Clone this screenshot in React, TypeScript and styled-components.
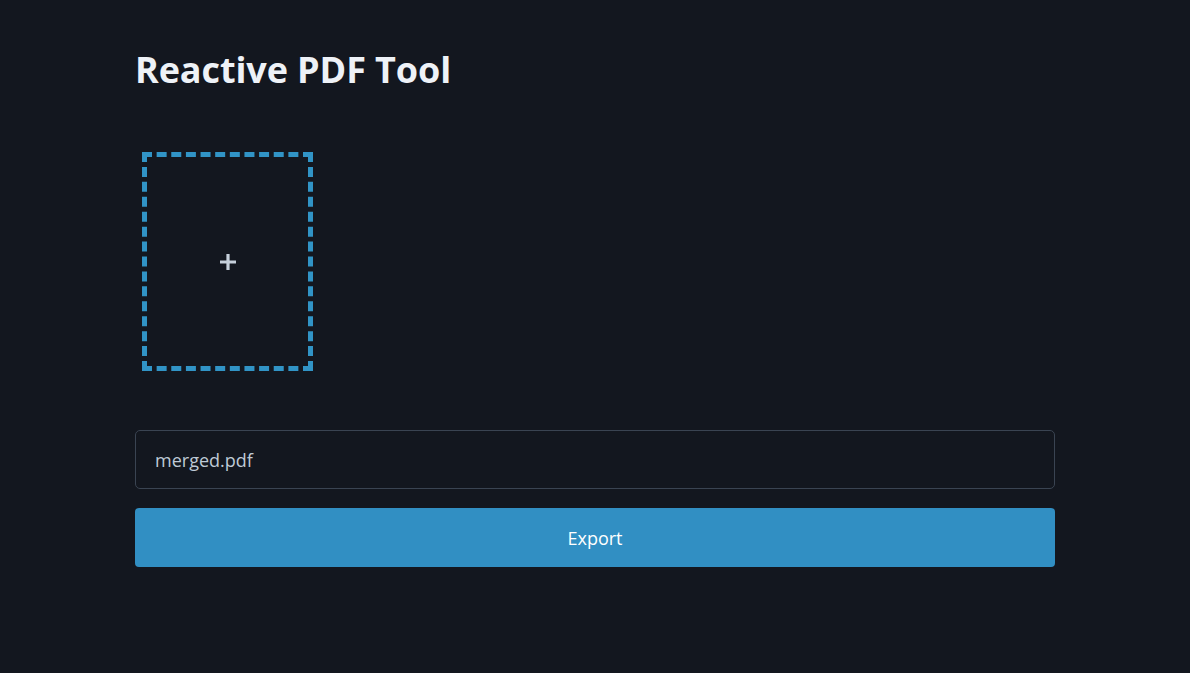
import React from "react";
import styled, { createGlobalStyle } from "styled-components";

const Global = createGlobalStyle`
  html, body { margin: 0; padding: 0; background: #13171f; }
  body { font-family: "Segoe UI", "Open Sans", "Noto Sans", sans-serif; color: #e8edf3; }
  * { box-sizing: border-box; }
`;

const Page = styled.main`
  width: 920px;
  margin: 0 0 0 135px;
  padding-top: 45px;
  display: flex;
  flex-direction: column;
`;

const Title = styled.h1`
  margin: 0;
  font-size: 36px;
  line-height: 49px;
  font-weight: 700;
  color: #eef2f7;
  letter-spacing: -0.1px;
`;

const Pages = styled.section`
  display: flex;
  gap: 16px;
  padding: 58px 7px 59px;
`;

const AddSlot = styled.button`
  width: 171px;
  height: 219px;
  border: 5px dashed #3194c6;
  background: transparent;
  display: flex;
  align-items: center;
  justify-content: center;
  cursor: pointer;
  padding: 0;
  color: #c6d0db;
`;

const Form = styled.div`
  display: flex;
  flex-direction: column;
  gap: 19px;
`;

const NameInput = styled.input`
  height: 59px;
  width: 100%;
  background: #13171f;
  border: 1px solid #3a4452;
  border-radius: 5px;
  padding: 0 19px;
  font-family: inherit;
  font-size: 18px;
  color: #bfcad6;
  outline: none;
`;

const ExportButton = styled.button`
  height: 59px;
  width: 100%;
  border: none;
  border-radius: 4px;
  background: #318fc3;
  color: #ffffff;
  font-family: inherit;
  font-size: 18px;
  padding-top: 2px;
  cursor: pointer;
`;

export default function App() {
  return (
    <>
      <Global />
      <Page>
        <Title>Reactive PDF Tool</Title>
        <Pages>
          <AddSlot aria-label="Add PDF">
            <svg width="18" height="18" viewBox="0 0 18 18">
              <path d="M9 1v16M1 9h16" stroke="currentColor" strokeWidth="3.2" />
            </svg>
          </AddSlot>
        </Pages>
        <Form>
          <NameInput defaultValue="merged.pdf" />
          <ExportButton>Export</ExportButton>
        </Form>
      </Page>
    </>
  );
}
